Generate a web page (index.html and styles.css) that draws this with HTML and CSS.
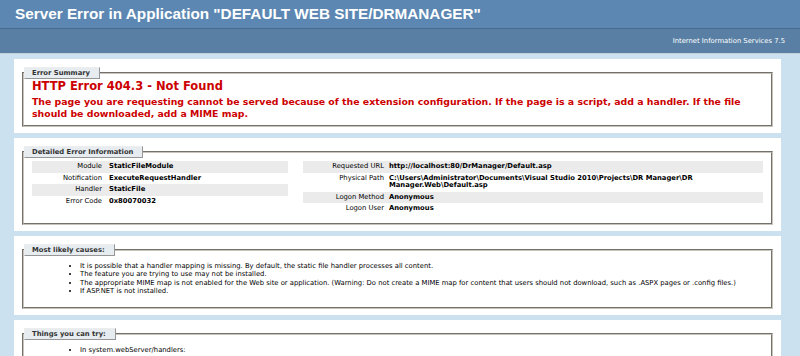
FILE: index.html
```html
<!DOCTYPE html>
<html lang="en">
<head>
    <meta charset="UTF-8">
    <title>IIS 7.5 Detailed Error - 404.3 - Not Found</title>
    <link rel="stylesheet" href="styles.css">
</head>
<body>
    <div class="header">
        <h1>Server Error in Application "DEFAULT WEB SITE/DRMANAGER"</h1>
    </div>
    <div class="server-version">Internet Information Services 7.5</div>

    <div class="content">
        <!-- Error Summary -->
        <div class="box">
            <fieldset>
                <legend>Error Summary</legend>
                <h2>HTTP Error 404.3 - Not Found</h2>
                <h3>The page you are requesting cannot be served because of the extension configuration. If the page is a script, add a handler. If the file should be downloaded, add a MIME map.</h3>
            </fieldset>
        </div>

        <!-- Detailed Error Information -->
        <div class="box">
            <fieldset>
                <legend>Detailed Error Information</legend>
                <div class="details">
                    <div class="details-left">
                        <table>
                            <tr class="alt"><th>Module</th><td>StaticFileModule</td></tr>
                            <tr><th>Notification</th><td>ExecuteRequestHandler</td></tr>
                            <tr class="alt"><th>Handler</th><td>StaticFile</td></tr>
                            <tr><th>Error Code</th><td>0x80070032</td></tr>
                        </table>
                    </div>
                    <div class="details-right">
                        <table>
                            <tr class="alt"><th>Requested URL</th><td>http://localhost:80/DrManager/Default.asp</td></tr>
                            <tr><th>Physical Path</th><td>C:\Users\Administrator\Documents\Visual Studio 2010\Projects\DR Manager\DR Manager.Web\Default.asp</td></tr>
                            <tr class="alt"><th>Logon Method</th><td>Anonymous</td></tr>
                            <tr><th>Logon User</th><td>Anonymous</td></tr>
                        </table>
                    </div>
                </div>
            </fieldset>
        </div>

        <!-- Most likely causes -->
        <div class="box">
            <fieldset>
                <legend>Most likely causes:</legend>
                <ul>
                    <li>It is possible that a handler mapping is missing. By default, the static file handler processes all content.</li>
                    <li>The feature you are trying to use may not be installed.</li>
                    <li>The appropriate MIME map is not enabled for the Web site or application. (Warning: Do not create a MIME map for content that users should not download, such as .ASPX pages or .config files.)</li>
                    <li>If ASP.NET is not installed.</li>
                </ul>
            </fieldset>
        </div>

        <!-- Things you can try -->
        <div class="box">
            <fieldset class="last">
                <legend>Things you can try:</legend>
                <ul>
                    <li>In system.webServer/handlers:</li>
                </ul>
            </fieldset>
        </div>
    </div>
</body>
</html>
```

FILE: styles.css
```css
body {
    margin: 0;
    background: #CBE1EF;
    font-family: "DejaVu Sans", Verdana, sans-serif;
    font-size: 6.8px;
    color: black;
}

/* Title bar */
.header {
    height: 28px;
    padding: 0 15px;
    background-color: #5C87B2;
    display: flex;
    align-items: center;
}

h1 {
    margin: 0;
    font-family: "Liberation Sans", Arial, sans-serif;
    font-size: 15.3px;
    font-weight: bold;
    color: #FFF;
}

.server-version {
    height: 24px;
    padding: 0 15px;
    background-color: #5A7FA5;
    border-top: 1px solid #4A6C8E;
    border-bottom: 1px solid #C1CFDD;
    color: #FFF;
    display: flex;
    align-items: center;
    justify-content: flex-end;
}

/* Content boxes */
.content {
    margin-left: 14px;
    width: 767px;
}

.box {
    background: #FFF;
    margin-top: 5px;
    padding: 8px 8px 6px 8px;
}

fieldset {
    margin: 0;
    padding: 0 8px 5px 8px;
    border: 2px groove #C8C4BC;
}

fieldset.last {
    padding-bottom: 40px;
}

legend {
    color: #333333;
    padding: 1px 9px 1px 7px;
    margin-left: -8px;
    line-height: 8px;
    border-top: 1px solid #EDEDED;
    border-left: 1px solid #EDEDED;
    border-right: 1px solid #969696;
    border-bottom: 1px solid #969696;
    background: #E7ECF0;
    font-weight: bold;
}

h2 {
    margin: 0;
    font-size: 11.5px;
    line-height: 14px;
    color: #CC0000;
}

h3 {
    margin: 3px 0 0 0;
    font-size: 9.35px;
    line-height: 12px;
    color: #CC0000;
}

/* Detail tables */
.details {
    display: flex;
    gap: 15px;
}

.details-left {
    width: 256px;
}

.details-right {
    flex: 1;
}

table {
    width: 100%;
    margin: 3px 0;
    border-collapse: collapse;
}

th, td {
    vertical-align: top;
    padding: 2px 0;
    line-height: 7.6px;
    text-align: left;
    font-weight: bold;
}

th {
    text-align: right;
    font-weight: normal;
}

.details-left th {
    width: 70px;
    padding-right: 7px;
}

.details-right th {
    width: 81px;
    padding-right: 5px;
}

tr.alt th, tr.alt td {
    background-color: #EBEBEB;
}

/* Lists */
ul {
    margin: 6px 0 6px 24px;
    padding-left: 24px;
}

li {
    line-height: 8.5px;
}
```
